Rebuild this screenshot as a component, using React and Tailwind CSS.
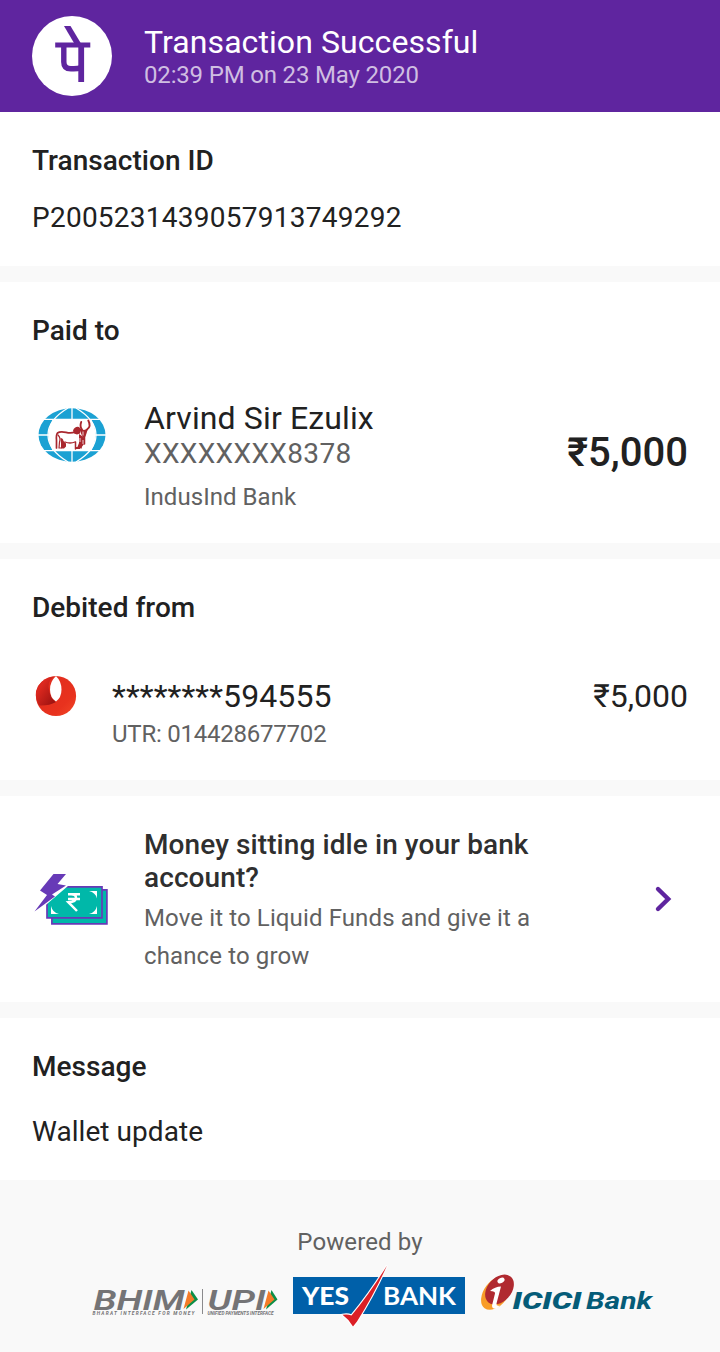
import React from 'react';

function PhonePeLogo() {
  return (
    <svg className="block size-20 shrink-0" viewBox="32 16 80 80" role="img" aria-label="PhonePe">
      <circle cx="72" cy="56" r="40" fill="#fff" />
      <g fill="none" stroke="#5f259f">
        <path d="M64 26h6.500l10.200 17h-6.700z" fill="#5f259f" stroke="none" />
        <path d="M55.200 45H90.300" strokeWidth="4.800" />
        <path d="M63.800 45v17q0 6.800 7 6.800h3q4 0 7.400-1.200" strokeWidth="5.400" />
        <path d="M81.200 45v37" strokeWidth="5.800" />
      </g>
    </svg>
  );
}

function IndusIndLogo() {
  return (
    <svg className="mt-[11px] block h-14 w-20 shrink-0" viewBox="32 407 80 56" role="img" aria-label="IndusInd Bank">
      <ellipse cx="72" cy="435" rx="33.500" ry="26.800" fill="#1ba1d3" />
      <g fill="none" stroke="#fff" strokeWidth="1.300">
        <path d="M72 407v56M38 435h68M42 419.400h60M42 450.700h60" />
        <path d="M68 408q-20 12-20 27t20 27M76 408q20 12 20 27t-20 27" />
      </g>
      <path d="M52.500 419.800h39q8 15 0 30.600h-39q-8-15.600 0-30.600z" fill="#fff" />
      <g fill="none" stroke="#a9272e" strokeLinejoin="round" strokeLinecap="round">
        <path d="M75 432q-4 1.500-9 .3-6-1.300-8.500.7-1.500 2-1 7v8" strokeWidth="1.700" />
        <path d="M58 435q3 3 1.500 7l-.5 6h2" strokeWidth="1.200" />
        <path d="M65 442q5 2 10 0" strokeWidth="1.300" />
        <path d="M82 429.500q-2.500-3-.8-7.500M87 429.500q4.500-3 1.300-9" strokeWidth="1.900" />
        <path d="M75.500 442v7M81 439v9M84.500 436v8" strokeWidth="1.500" />
      </g>
      <g fill="#a9272e">
        <path d="M73 430.500q2-4.500 6-3.500l2.500 2.500-1.500 4-3 1-3-1z" />
        <path d="M81 429l3 1 4-1.500-1.200 4-1.300 4-2.500 1-2-4z" />
        <path d="M60.500 438q2.500 0 3 3l2.500 2.500v3l-2 2h-3v-5zM79 434l3 2 3 2-1 6-3 4h-4l2-5zM75 447h5v2h-5z" />
      </g>
      <path d="M83 431.500v4M80 438v4M83 440v4" stroke="#fff" strokeWidth=".8" />
    </svg>
  );
}

function BankLogo() {
  return (
    <svg className="block size-12 shrink-0" viewBox="32 672 48 48" role="img" aria-label="Bank">
      <defs>
        <linearGradient id="orb" x1="0" y1="0" x2="1" y2="1">
          <stop offset="0" stopColor="#df2b1e" />
          <stop offset=".7" stopColor="#e8321e" />
          <stop offset="1" stopColor="#f34827" />
        </linearGradient>
        <linearGradient id="orbShade" x1="0" y1="0" x2="1" y2="1">
          <stop offset=".3" stopColor="#dc281f" />
          <stop offset="1" stopColor="#930f0e" />
        </linearGradient>
      </defs>
      <circle cx="56" cy="696" r="20.100" fill="url(#orb)" />
      <path d="M54 676.500Q46 682 49.500 692q2 7 6.500 10-7 4-17 3.500Q33 695 38 686q5-8 16-9.500z" fill="url(#orbShade)" />
      <path d="M56 676q-6 5.500-6 13.500 0 8.500 6 12 5.500-4 5.500-12 0-8-5.500-13.500z" fill="#fff" />
    </svg>
  );
}

function CashIcon() {
  return (
    <svg className="block h-14 w-20 shrink-0" viewBox="32 871 80 56" aria-hidden="true">
      <path d="M51.900 889.800h55v34.100h-55z" fill="#00b8a9" stroke="#673ab7" strokeWidth="1.700" />
      <path d="M47 886.900h55v31H47z" fill="#00b8a9" stroke="#673ab7" strokeWidth="1.700" />
      <path d="M89 891h8v7.500q-1.500-6-8-7.500zM97 906v8h-8q6.500-1.500 8-8zM51 906v8h8q-6.500-1.500-8-8z" fill="#fff" />
      <path d="M33.500 915.500L48 897l-9-2 13-22h17l-3 10.500 4 .8z" fill="#fff" />
      <path d="M34.500 911.500L47 895l-7-4.500L53.500 874H66l-8.500 10 8.500 1.500-14 9 3 2z" fill="#673ab7" />
      <path d="M68 894.200h12M68 899h12M68.500 894.200h2.500q5 0 5 3.600 0 4.300-7.500 4.500l8.500 8.700" fill="none" stroke="#fff" strokeWidth="2.500" />
    </svg>
  );
}

function UpiLogo() {
  return (
    <svg className="block h-14 w-[188px] overflow-visible" viewBox="92 1268 188 56" role="img" aria-label="BHIM UPI">
      <g fontFamily="Roboto, sans-serif" fontStyle="italic" fill="#747476">
        <text x="93.500" y="1309.500" fontSize="27" fontWeight="600" textLength="91" lengthAdjust="spacingAndGlyphs">BHIM</text>
        <text x="207.500" y="1309.500" fontSize="27" fontWeight="600" textLength="58" lengthAdjust="spacingAndGlyphs">UPI</text>
        <text x="92.500" y="1314.600" fontSize="4.800" fontWeight="700" textLength="102" lengthAdjust="spacing">BHARAT INTERFACE FOR MONEY</text>
        <text x="207.500" y="1314.600" fontSize="4.800" fontWeight="700" textLength="66" lengthAdjust="spacingAndGlyphs">UNIFIED PAYMENTS INTERFACE</text>
      </g>
      <path d="M202.500 1289v25" stroke="#8a8a8c" strokeWidth="1" />
      <path d="M191.500 1290l6.500 9.500-12 10z" fill="#0b8f48" />
      <path d="M188.500 1290.500l6 9-11 9.500z" fill="#f47b28" />
      <path d="M271.500 1290l6 9.500-11.500 10z" fill="#0b8f48" />
      <path d="M268.500 1290.500l6 9-11 9.500z" fill="#f47b28" />
    </svg>
  );
}

function YesBankLogo() {
  return (
    <svg className="ml-3 block h-[62px] w-[174px]" viewBox="292 1265 174 62" role="img" aria-label="YES BANK">
      <path d="M293 1277h172v37H293z" fill="#0060a9" />
      <g fontFamily="Lato, sans-serif" fill="#fff">
        <text x="302" y="1305" fontSize="25.500" fontWeight="900" textLength="47" lengthAdjust="spacingAndGlyphs">YES</text>
        <text x="383" y="1305" fontSize="25.500" fontWeight="700" textLength="73" lengthAdjust="spacingAndGlyphs">BANK</text>
      </g>
      <path d="M342.500 1314.800q5-1 9 .7 19-23 35.500-50-13 29-30 56l-4 5q-4-7-10.500-11.700z" fill="#dc1f26" stroke="#fff" strokeWidth="2.200" paintOrder="stroke" />
    </svg>
  );
}

function IciciLogo() {
  return (
    <svg className="ml-3.5 block h-10 w-[174px] overflow-visible" viewBox="480 1272 174 40" role="img" aria-label="ICICI Bank">
      <ellipse cx="496" cy="1293" rx="19" ry="12" transform="rotate(-53 496 1293)" fill="#f89c28" />
      <ellipse cx="499.500" cy="1289.500" rx="17" ry="11.800" transform="rotate(-48 499.500 1289.500)" fill="#b02a30" />
      <ellipse cx="501" cy="1280.500" rx="3.800" ry="2.500" transform="rotate(-28 501 1280.500)" fill="#fff" />
      <path d="M490 1291q5-4.500 11-4.500l-4.500 17q-.5 3 3.500 2l-3 3q-5 1-5-3l3-12q.5-2.500-5-2.500z" fill="#fff" />
      <g fontFamily="Roboto, sans-serif" fontStyle="italic" fill="#055c78">
        <text x="512.500" y="1308.500" fontSize="23.500" fontWeight="900" textLength="69" lengthAdjust="spacingAndGlyphs">ICICI</text>
        <text x="586" y="1308.500" fontSize="23" fontWeight="700" textLength="66" lengthAdjust="spacingAndGlyphs">Bank</text>
      </g>
    </svg>
  );
}

function SectionTitle({ children }) {
  return <h2 className="text-[28px] leading-8 font-medium tracking-[0.03px]">{children}</h2>;
}

export default function App() {
  return (
    <main className="flex h-[1352px] w-[720px] flex-col gap-4 overflow-hidden bg-[#f9f9f9] font-['Roboto',sans-serif] whitespace-nowrap text-[#212121]">
      <div>
        <header className="flex h-28 items-center bg-[#5f259f] px-8">
          <PhonePeLogo />
          <div className="ml-8 pt-0.5">
            <h1 className="text-[32px] leading-9 tracking-[0.08px] text-white">Transaction Successful</h1>
            <p className="text-2xl leading-[30px] tracking-[-0.17px] text-[#cfbee2]">02:39 PM on 23 May 2020</p>
          </div>
        </header>
        <section className="h-[154px] bg-white px-8 pt-[33px]">
          <SectionTitle>Transaction ID</SectionTitle>
          <p className="mt-[25px] text-[28px] leading-8 tracking-[0.25px]">P2005231439057913749292</p>
        </section>
      </div>

      <section className="h-[261px] bg-white px-8 pt-[33px]">
        <SectionTitle>Paid to</SectionTitle>
        <div className="mt-[49px] flex">
          <IndusIndLogo />
          <div className="ml-8 flex-1 text-[#616161]">
            <p className="pt-1 text-[32px] leading-9 tracking-[0.13px] text-[#212121]">Arvind Sir Ezulix</p>
            <p className="mt-px text-[28px] leading-[34px] tracking-[0.35px]">XXXXXXXX8378</p>
            <p className="mt-2.5 text-2xl leading-8 tracking-[0.04px]">IndusInd Bank</p>
          </div>
          <p className="mt-[33px] text-[40px] leading-[48px] font-medium">₹5,000</p>
        </div>
      </section>

      <section className="h-[221px] bg-white px-8 pt-[33px]">
        <SectionTitle>Debited from</SectionTitle>
        <div className="mt-12 flex">
          <BankLogo />
          <div className="ml-8 flex-1">
            <p className="pt-1.5 text-[32px] leading-9 tracking-[0.1px]">********594555</p>
            <p className="mt-1 text-2xl leading-8 tracking-[-0.23px] text-[#616161]">UTR: 014428677702</p>
          </div>
          <p className="pt-1.5 text-[32px] leading-9">₹5,000</p>
        </div>
      </section>

      <section className="flex h-[206px] items-center bg-white pr-[42px] pl-8">
        <CashIcon />
        <div className="ml-8 flex-1 pt-[5px]">
          <h2 className="text-[28px] leading-[33px] font-medium tracking-[0.09px] text-[#2f2f2f]">Money sitting idle in your bank<br />account?</h2>
          <p className="mt-[5px] text-2xl leading-[38px] tracking-[0.12px] text-[#616161]">Move it to Liquid Funds and give it a<br />chance to grow</p>
        </div>
        <svg className="block h-8 w-7" viewBox="650 883 28 32" fill="none" aria-hidden="true">
          <path d="M658 889l10.200 10L658 909" stroke="#5f259f" strokeWidth="4.400" strokeLinecap="round" />
        </svg>
      </section>

      <div>
        <section className="h-[162px] bg-white px-8 pt-[33px]">
          <SectionTitle>Message</SectionTitle>
          <p className="mt-[33px] text-[28px] leading-8 tracking-[0.05px]">Wallet update</p>
        </section>
        <footer className="pt-[46px]">
          <p className="text-center text-2xl leading-8 tracking-[0.1px] text-[#616161]">Powered by</p>
          <div className="mt-[7px] flex items-start pl-[92px]">
            <div className="pt-[3px]"><UpiLogo /></div>
            <YesBankLogo />
            <div className="pt-[7px]"><IciciLogo /></div>
          </div>
        </footer>
      </div>
    </main>
  );
}
